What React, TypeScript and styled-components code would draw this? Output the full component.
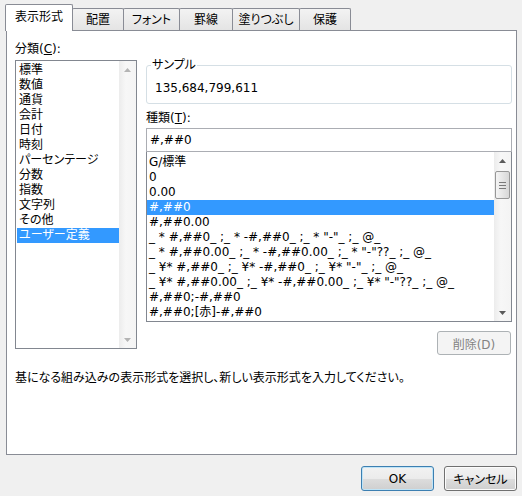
import React from "react";
import styled, { createGlobalStyle } from "styled-components";

const GlobalStyle = createGlobalStyle`
  html, body {
    margin: 0;
    padding: 0;
    background: #f0f0f0;
  }
  body {
    font-family: "DejaVu Sans", "Noto Sans CJK JP", sans-serif;
    font-size: 12px;
    color: #000;
    font-feature-settings: "palt";
  }
`;

const Dialog = styled.div`
  width: 522px;
  height: 496px;
  display: flex;
  flex-direction: column;
`;

const TabStrip = styled.div`
  display: flex;
  align-items: flex-end;
  height: 30px;
  padding-left: 5px;
`;

const Tab = styled.div<{ $active?: boolean; $w: number }>`
  box-sizing: border-box;
  width: ${(p) => p.$w}px;
  height: ${(p) => (p.$active ? 27 : 22)}px;
  margin-bottom: ${(p) => (p.$active ? -1 : 0)}px;
  margin-left: -1px;
  &:first-child { margin-left: 0; }
  border: 1px solid #898c95;
  border-bottom: none;
  border-radius: 2px 2px 0 0;
  background: ${(p) => (p.$active ? "#fff" : "linear-gradient(#f3f3f3, #e4e4e4)")};
  position: relative;
  z-index: ${(p) => (p.$active ? 2 : 0)};
  display: flex;
  align-items: center;
  justify-content: center;
  line-height: 16px;
  padding-bottom: ${(p) => (p.$active ? 2 : 0)}px;
`;

const Panel = styled.div`
  box-sizing: border-box;
  margin: 0 5px 0 6px;
  height: 425px;
  border: 1px solid #898c95;
  background: #fff;
  padding: 10px 3px 0 8px;
  display: flex;
  flex-direction: column;
`;

const TopRow = styled.div`
  display: flex;
  gap: 9px;
  align-items: flex-start;
`;

const LeftColumn = styled.div`
  width: 122px;
  display: flex;
  flex-direction: column;
`;

const RightColumn = styled.div`
  width: 366px;
  margin-top: 17px;
  display: flex;
  flex-direction: column;
`;

const Label = styled.div<{ $mt?: number; $mb?: number }>`
  line-height: 16px;
  margin-top: ${(p) => p.$mt ?? 0}px;
  margin-bottom: ${(p) => p.$mb ?? 0}px;
  u { text-decoration: underline; text-underline-offset: 1px; }
`;

const ListBox = styled.div<{ $h: number; $mt?: number }>`
  box-sizing: border-box;
  height: ${(p) => p.$h}px;
  margin-top: ${(p) => p.$mt ?? 0}px;
  border: 1px solid #828790;
  background: #fff;
  display: flex;
`;

const Items = styled.div<{ $pt: number; $pl: number }>`
  flex: 1;
  min-width: 0;
  padding: ${(p) => p.$pt}px 0 0 ${(p) => p.$pl}px;
  overflow: hidden;
`;

const Item = styled.div<{ $selected?: boolean }>`
  height: 15px;
  line-height: 15px;
  padding-left: 2px;
  white-space: pre;
  background: ${(p) => (p.$selected ? "#3399ff" : "transparent")};
  color: ${(p) => (p.$selected ? "#fff" : "#000")};
`;

const ScrollBar = styled.div`
  width: 17px;
  display: flex;
  flex-direction: column;
  background: linear-gradient(to right, #ececec, #f7f7f7 40%, #f4f4f4);
`;

const ArrowCell = styled.div`
  height: 17px;
  display: flex;
  align-items: center;
  justify-content: center;
`;

const Track = styled.div`
  flex: 1;
  padding: 2px 0 0 0;
`;

const Thumb = styled.div`
  box-sizing: border-box;
  margin: 0 1px;
  height: 28px;
  border: 1px solid #979797;
  border-radius: 2px;
  background: linear-gradient(to right, #f4f4f4, #e6e6e6 50%, #d7d7d7);
  display: flex;
  flex-direction: column;
  align-items: center;
  justify-content: center;
  gap: 2px;
`;

const Grip = styled.div`
  width: 7px;
  height: 1px;
  background: #7a7a7a;
`;

const SampleGroup = styled.fieldset`
  margin: 0;
  min-width: 0;
  border: 1px solid #d5dfe5;
  border-radius: 3px;
  padding: 8px 8px 7px 8px;
`;

const Legend = styled.legend`
  padding: 0 1px;
  margin-left: -4px;
  line-height: 14px;
  font-size: 12px;
`;

const SampleValue = styled.div`
  line-height: 16px;
`;

const FormatField = styled.div`
  box-sizing: border-box;
  height: 24px;
  margin-top: 2px;
  border: 1px solid #abadb3;
  padding: 0 3px;
  line-height: 22px;
  background: #fff;
  position: relative;
  z-index: 1;
`;

const ButtonRow = styled.div<{ $mt: number; $pr: number }>`
  display: flex;
  justify-content: flex-end;
  gap: 10px;
  margin-top: ${(p) => p.$mt}px;
  padding-right: ${(p) => p.$pr}px;
`;

const Button = styled.button<{ $primary?: boolean }>`
  box-sizing: border-box;
  width: 73px;
  height: 25px;
  padding: 0;
  font: inherit;
  font-feature-settings: "palt";
  color: #000;
  border: 1px solid ${(p) => (p.$primary ? "#3c7fb1" : "#707070")};
  border-radius: 3px;
  background: linear-gradient(#f2f2f2 0%, #ebebeb 50%, #dddddd 51%, #cfcfcf 100%);
  box-shadow: ${(p) => (p.$primary ? "inset 0 0 0 1px #bfe4f7" : "inset 0 0 0 1px #fcfcfc")};
  &:disabled {
    width: 74px;
    height: 24px;
    border-color: #adb2b5;
    background: #f4f4f4;
    color: #838383;
    box-shadow: none;
  }
`;

const Description = styled.div`
  margin-top: 15px;
  line-height: 16px;
`;

const Arrow: React.FC<{ up?: boolean; faint?: boolean }> = ({ up, faint }) => (
  <svg width="7" height="4" viewBox="0 0 7 4">
    <polygon
      points={up ? "0,4 3.5,0 7,4" : "0,0 3.5,4 7,0"}
      fill={faint ? "#b4b4b4" : "#5a5a5a"}
    />
  </svg>
);

const categories = [
  "標準",
  "数値",
  "通貨",
  "会計",
  "日付",
  "時刻",
  "パーセンテージ",
  "分数",
  "指数",
  "文字列",
  "その他",
  "ユーザー定義",
];

const formats = [
  "G/標準",
  "0",
  "0.00",
  "#,##0",
  "#,##0.00",
  '_ * #,##0_ ;_ * -#,##0_ ;_ * "-"_ ;_ @_',
  '_ * #,##0.00_ ;_ * -#,##0.00_ ;_ * "-"??_ ;_ @_',
  '_ ¥* #,##0_ ;_ ¥* -#,##0_ ;_ ¥* "-"_ ;_ @_',
  '_ ¥* #,##0.00_ ;_ ¥* -#,##0.00_ ;_ ¥* "-"??_ ;_ @_',
  "#,##0;-#,##0",
  "#,##0;[赤]-#,##0",
];

const tabs: { label: string; w: number }[] = [
  { label: "表示形式", w: 68 },
  { label: "配置", w: 52 },
  { label: "フォント", w: 57 },
  { label: "罫線", w: 54 },
  { label: "塗りつぶし", w: 68 },
  { label: "保護", w: 52 },
];

export default function App() {
  return (
    <Dialog>
      <GlobalStyle />
      <TabStrip>
        {tabs.map((t, i) => (
          <Tab key={t.label} $w={t.w} $active={i === 0}>
            {t.label}
          </Tab>
        ))}
      </TabStrip>
      <Panel>
        <TopRow>
          <LeftColumn>
            <Label $mb={3}>
              分類(<u>C</u>):
            </Label>
            <ListBox $h={289}>
              <Items $pt={2} $pl={1}>
                {categories.map((c) => (
                  <Item key={c} $selected={c === "ユーザー定義"}>
                    {c}
                  </Item>
                ))}
              </Items>
              <ScrollBar>
                <ArrowCell>
                  <Arrow up faint />
                </ArrowCell>
                <Track />
                <ArrowCell>
                  <Arrow faint />
                </ArrowCell>
              </ScrollBar>
            </ListBox>
          </LeftColumn>
          <RightColumn>
            <SampleGroup>
              <Legend>サンプル</Legend>
              <SampleValue>135,684,799,611</SampleValue>
            </SampleGroup>
            <Label $mt={6}>
              種類(<u>T</u>):
            </Label>
            <FormatField>#,##0</FormatField>
            <ListBox $h={171} $mt={-1}>
              <Items $pt={3} $pl={0}>
                {formats.map((f, i) => (
                  <Item key={f} $selected={i === 3}>
                    {f}
                  </Item>
                ))}
              </Items>
              <ScrollBar>
                <ArrowCell>
                  <Arrow up />
                </ArrowCell>
                <Track>
                  <Thumb>
                    <Grip />
                    <Grip />
                    <Grip />
                  </Thumb>
                </Track>
                <ArrowCell>
                  <Arrow />
                </ArrowCell>
              </ScrollBar>
            </ListBox>
            <ButtonRow $mt={9} $pr={1}>
              <Button disabled>削除(D)</Button>
            </ButtonRow>
          </RightColumn>
        </TopRow>
        <Description>
          基になる組み込みの表示形式を選択し、新しい表示形式を入力してください。
        </Description>
      </Panel>
      <ButtonRow $mt={11} $pr={5}>
        <Button $primary>OK</Button>
        <Button>キャンセル</Button>
      </ButtonRow>
    </Dialog>
  );
}
